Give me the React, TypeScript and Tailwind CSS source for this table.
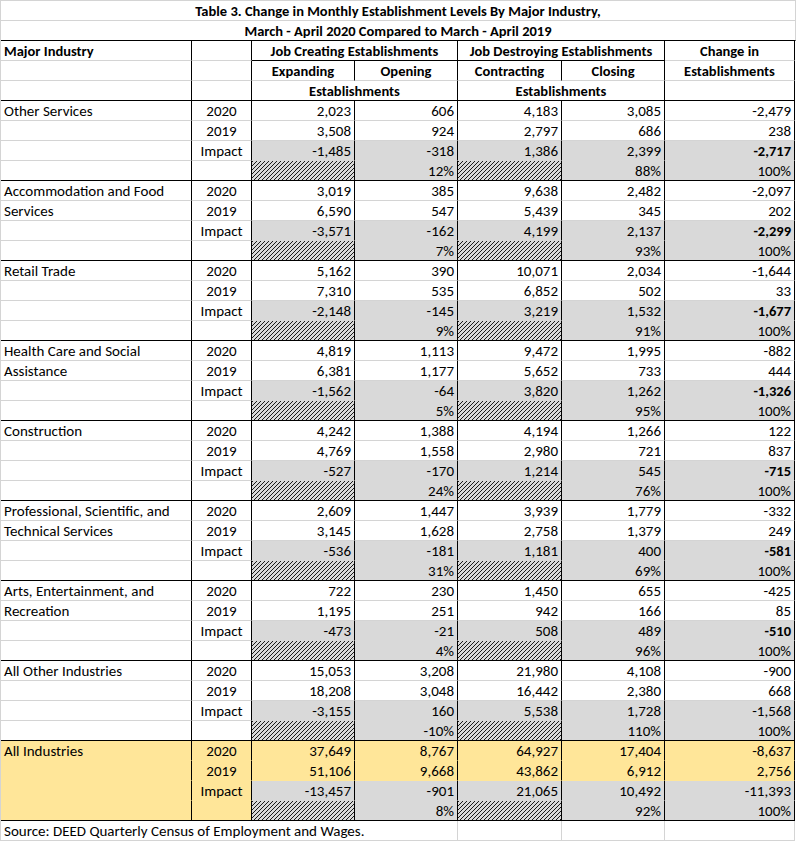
import React from "react";

type Block = {
  name: [string, string];
  y2020: string[];
  y2019: string[];
  impact: string[];
  pct: [string, string];
  boldTotal: boolean;
  highlight?: boolean;
};

const blocks: Block[] = [
  {
    name: ["Other Services", ""],
    y2020: ["2,023", "606", "4,183", "3,085", "-2,479"],
    y2019: ["3,508", "924", "2,797", "686", "238"],
    impact: ["-1,485", "-318", "1,386", "2,399", "-2,717"],
    pct: ["12%", "88%"],
    boldTotal: true,
  },
  {
    name: ["Accommodation and Food", "Services"],
    y2020: ["3,019", "385", "9,638", "2,482", "-2,097"],
    y2019: ["6,590", "547", "5,439", "345", "202"],
    impact: ["-3,571", "-162", "4,199", "2,137", "-2,299"],
    pct: ["7%", "93%"],
    boldTotal: true,
  },
  {
    name: ["Retail Trade", ""],
    y2020: ["5,162", "390", "10,071", "2,034", "-1,644"],
    y2019: ["7,310", "535", "6,852", "502", "33"],
    impact: ["-2,148", "-145", "3,219", "1,532", "-1,677"],
    pct: ["9%", "91%"],
    boldTotal: true,
  },
  {
    name: ["Health Care and Social", "Assistance"],
    y2020: ["4,819", "1,113", "9,472", "1,995", "-882"],
    y2019: ["6,381", "1,177", "5,652", "733", "444"],
    impact: ["-1,562", "-64", "3,820", "1,262", "-1,326"],
    pct: ["5%", "95%"],
    boldTotal: true,
  },
  {
    name: ["Construction", ""],
    y2020: ["4,242", "1,388", "4,194", "1,266", "122"],
    y2019: ["4,769", "1,558", "2,980", "721", "837"],
    impact: ["-527", "-170", "1,214", "545", "-715"],
    pct: ["24%", "76%"],
    boldTotal: true,
  },
  {
    name: ["Professional, Scientific, and", "Technical Services"],
    y2020: ["2,609", "1,447", "3,939", "1,779", "-332"],
    y2019: ["3,145", "1,628", "2,758", "1,379", "249"],
    impact: ["-536", "-181", "1,181", "400", "-581"],
    pct: ["31%", "69%"],
    boldTotal: true,
  },
  {
    name: ["Arts, Entertainment, and", "Recreation"],
    y2020: ["722", "230", "1,450", "655", "-425"],
    y2019: ["1,195", "251", "942", "166", "85"],
    impact: ["-473", "-21", "508", "489", "-510"],
    pct: ["4%", "96%"],
    boldTotal: true,
  },
  {
    name: ["All Other Industries", ""],
    y2020: ["15,053", "3,208", "21,980", "4,108", "-900"],
    y2019: ["18,208", "3,048", "16,442", "2,380", "668"],
    impact: ["-3,155", "160", "5,538", "1,728", "-1,568"],
    pct: ["-10%", "110%"],
    boldTotal: false,
  },
  {
    name: ["All Industries", ""],
    y2020: ["37,649", "8,767", "64,927", "17,404", "-8,637"],
    y2019: ["51,106", "9,668", "43,862", "6,912", "2,756"],
    impact: ["-13,457", "-901", "21,065", "10,492", "-11,393"],
    pct: ["8%", "92%"],
    boldTotal: false,
    highlight: true,
  },
];

const cols = "grid grid-cols-[191px_60px_103px_103px_104px_103px_130px]";
const hatch =
  "bg-[repeating-linear-gradient(135deg,#1a1a1a_0_0.9px,#d9d9d9_0.9px_2.83px)]";
const grid = "border-b-[#d4d4d4]";

const Row = ({ children }: { children: React.ReactNode }) => (
  <div className={`${cols} h-[20px]`}>{children}</div>
);

// excel-ish cell: text sits at the bottom of a 20px row
const Cell = ({
  children,
  className = "",
}: {
  children?: React.ReactNode;
  className?: string;
}) => (
  <div className={`h-[20px] leading-[21px] px-[3px] whitespace-nowrap border-r border-b ${className}`}>
    {children}
  </div>
);

const Head = ({ children, className = "" }: { children?: React.ReactNode; className?: string }) => (
  <Cell className={`font-bold text-[14.5px] text-center ${className}`}>{children}</Cell>
);

const IndustryBlock = ({ b }: { b: Block }) => {
  const base = b.highlight ? "bg-[#ffe699] border-b-[#ffe699]" : `bg-white ${grid}`;
  const side = b.highlight ? "bg-[#ffe699]" : "bg-white";
  const sideB = b.highlight ? "border-b-[#ffe699]" : grid;
  const gray = "bg-[#d9d9d9] border-b-[#d9d9d9] text-right";
  return (
    <>
      <Row>
        <Cell className={`${base} border-r-black`}>{b.name[0]}</Cell>
        <Cell className={`${base} border-r-black text-center`}>2020</Cell>
        {b.y2020.map((v, i) => (
          <Cell key={i} className={`${base} border-r-black text-right`}>{v}</Cell>
        ))}
      </Row>
      <Row>
        <Cell className={`${base} border-r-black`}>{b.name[1]}</Cell>
        <Cell className={`${base} border-r-black text-center`}>2019</Cell>
        {b.y2019.map((v, i) => (
          <Cell key={i} className={`${base} border-r-black text-right`}>{v}</Cell>
        ))}
      </Row>
      <Row>
        <Cell className={`${side} ${sideB} border-r-black`} />
        <Cell className={`${side} ${sideB} border-r-black text-center`}>Impact</Cell>
        {b.impact.map((v, i) => (
          <Cell
            key={i}
            className={`${gray} border-r-black ${i === 4 && b.boldTotal ? "font-bold text-[14.5px]" : ""}`}
          >
            {v}
          </Cell>
        ))}
      </Row>
      <Row>
        <Cell className={`${side} border-r-black border-b-black`} />
        <Cell className={`${side} border-r-black border-b-black`} />
        <Cell className={`${hatch} border-r-black border-b-black`} />
        <Cell className="bg-[#d9d9d9] text-right border-r-black border-b-black">{b.pct[0]}</Cell>
        <Cell className={`${hatch} border-r-black border-b-black`} />
        <Cell className="bg-[#d9d9d9] text-right border-r-black border-b-black">{b.pct[1]}</Cell>
        <Cell className="bg-[#d9d9d9] text-right border-r-black border-b-black">100%</Cell>
      </Row>
    </>
  );
};

export default function App() {
  return (
    <div className="w-[797px] h-[841px] bg-white text-black text-[15px] overflow-hidden font-['Carlito','Lato',sans-serif]">
      <div className="w-[796px] border-l border-t border-[#d4d4d4]">
        <div className="h-[20px] leading-[21px] border-b border-r border-[#d4d4d4] text-center font-bold text-[14.5px]">
          Table 3. Change in Monthly Establishment Levels By Major Industry,
        </div>
        <div className="h-[20px] leading-[21px] border-b border-b-black border-r border-r-[#d4d4d4] text-center font-bold text-[14.5px]">
          March - April 2020 Compared to March - April 2019
        </div>

        <Row>
          <Head className={`text-left border-r-black ${grid}`}>Major Industry</Head>
          <Cell className={`border-r-black ${grid}`} />
          <Head className="col-span-2 border-r-black border-b-black">Job Creating Establishments</Head>
          <Head className="col-span-2 border-r-black border-b-black">Job Destroying Establishments</Head>
          <Head className={`border-r-black ${grid}`}>Change in</Head>
        </Row>
        <Row>
          <Cell className={`border-r-black ${grid}`} />
          <Cell className={`border-r-black ${grid}`} />
          <Head className={`border-r-black ${grid}`}>Expanding</Head>
          <Head className={`border-r-black ${grid}`}>Opening</Head>
          <Head className={`border-r-black ${grid}`}>Contracting</Head>
          <Head className={`border-r-black ${grid}`}>Closing</Head>
          <Head className={`border-r-black ${grid}`}>Establishments</Head>
        </Row>
        <Row>
          <Cell className="border-r-black border-b-black" />
          <Cell className="border-r-black border-b-black" />
          <Head className="col-span-2 border-r-black border-b-black">Establishments</Head>
          <Head className="col-span-2 border-r-black border-b-black">Establishments</Head>
          <Cell className="border-r-black border-b-black" />
        </Row>

        {blocks.map((b) => (
          <IndustryBlock key={b.name[0]} b={b} />
        ))}

        <Row>
          <Cell className={`col-span-4 border-r-[#d4d4d4] ${grid}`}>
            Source: DEED Quarterly Census of Employment and Wages.
          </Cell>
          <Cell className={`border-r-[#d4d4d4] ${grid}`} />
          <Cell className={`border-r-[#d4d4d4] ${grid}`} />
          <Cell className={`border-r-[#d4d4d4] ${grid}`} />
        </Row>
      </div>
    </div>
  );
}
